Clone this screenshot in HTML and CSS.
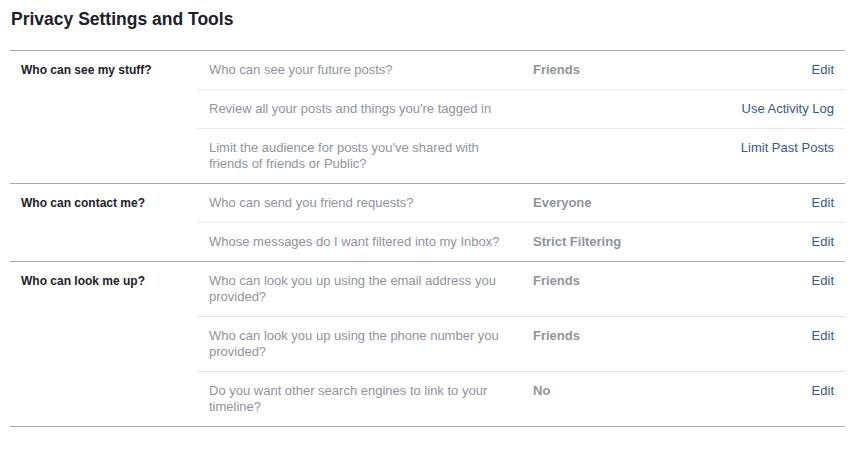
FILE: index.html
```html
<!DOCTYPE html>
<html>
<head>
<meta charset="utf-8">
<link rel="stylesheet" href="styles.css">
</head>
<body>
<div class="page">
  <h1 class="title">Privacy Settings and Tools</h1>
  <div class="table">
    <section class="section">
      <div class="label">Who can see my stuff?</div>
      <div class="rows">
        <div class="row"><div class="desc">Who can see your future posts?</div><div class="value">Friends</div><a class="action">Edit</a></div>
        <div class="row"><div class="desc">Review all your posts and things you're tagged in</div><div class="value"></div><a class="action">Use Activity Log</a></div>
        <div class="row"><div class="desc">Limit the audience for posts you've shared with friends of friends or Public?</div><div class="value"></div><a class="action">Limit Past Posts</a></div>
      </div>
    </section>
    <section class="section">
      <div class="label">Who can contact me?</div>
      <div class="rows">
        <div class="row"><div class="desc">Who can send you friend requests?</div><div class="value">Everyone</div><a class="action">Edit</a></div>
        <div class="row"><div class="desc">Whose messages do I want filtered into my Inbox?</div><div class="value">Strict Filtering</div><a class="action">Edit</a></div>
      </div>
    </section>
    <section class="section">
      <div class="label">Who can look me up?</div>
      <div class="rows">
        <div class="row"><div class="desc">Who can look you up using the email address you provided?</div><div class="value">Friends</div><a class="action">Edit</a></div>
        <div class="row"><div class="desc">Who can look you up using the phone number you provided?</div><div class="value">Friends</div><a class="action">Edit</a></div>
        <div class="row"><div class="desc">Do you want other search engines to link to your timeline?</div><div class="value">No</div><a class="action">Edit</a></div>
      </div>
    </section>
  </div>
</div>
</body>
</html>
```

FILE: styles.css
```css
html, body {
  margin: 0;
  padding: 0;
  background: #ffffff;
}
body {
  font-family: "Liberation Sans", Arial, sans-serif;
  font-size: 12px;
  line-height: 16px;
  color: #1d2129;
}
.page {
  padding: 0 13px 0 10px;
}
.title {
  margin: 8px 0 20px 1px;
  font-size: 17.5px;
  line-height: 22px;
  font-weight: bold;
  color: #1d2129;
}
.table {
  border-bottom: 1px solid #aaaaaa;
}
.section {
  display: flex;
  border-top: 1px solid #aaaaaa;
}
.label {
  width: 165px;
  flex: none;
  padding: 11px 11px;
  font-weight: bold;
  color: #1d2129;
}
.rows {
  flex: 1;
  display: flex;
  flex-direction: column;
}
.row {
  display: grid;
  grid-template-columns: 312px 1fr auto;
  column-gap: 12px;
  padding: 11px 11px 11px 12px;
  font-size: 13px;
  line-height: 16px;
}
.row + .row {
  border-top: 1px solid #e5e5e5;
}
.desc {
  color: #90949c;
}
.value {
  color: #90949c;
  font-weight: bold;
}
.action {
  color: #365899;
  text-align: right;
  cursor: pointer;
}
```
